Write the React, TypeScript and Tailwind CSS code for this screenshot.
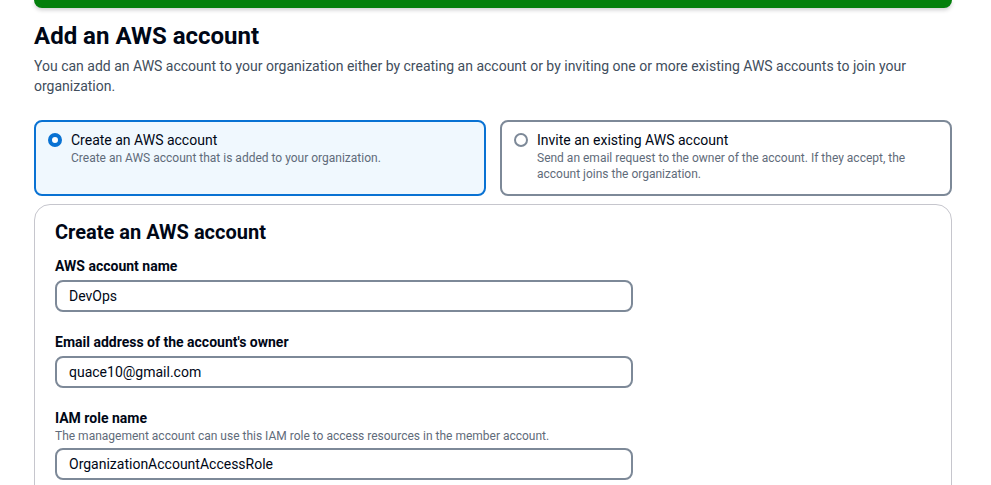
const font = { fontFamily: 'Roboto, "Liberation Sans", Arial, sans-serif' };

function Radio({ checked }: { checked: boolean }) {
  return checked ? (
    <span className="mt-[3px] box-border h-[14px] w-[14px] shrink-0 rounded-full border-[4px] border-[#0972d3] bg-white" />
  ) : (
    <span className="mt-[3px] box-border h-[14px] w-[14px] shrink-0 rounded-full border-2 border-[#7d8998] bg-white" />
  );
}

function Tile({
  checked,
  title,
  description,
}: {
  checked: boolean;
  title: string;
  description: string;
}) {
  return (
    <div
      className={
        checked
          ? "flex gap-[9px] rounded-lg border-2 border-[#0972d3] bg-[#f0f8fe] px-[12px] pt-[8px] pb-[12px]"
          : "flex gap-[9px] rounded-lg border-2 border-[#7d8998] bg-white px-[12px] pt-[8px] pb-[12px]"
      }
    >
      <Radio checked={checked} />
      <div className="flex flex-col">
        <span className="text-[14px] leading-[20px] text-[#000716]">{title}</span>
        <span className="text-[12px] leading-[16px] text-[#5f6b7a]">{description}</span>
      </div>
    </div>
  );
}

function Field({
  label,
  hint,
  value,
}: {
  label: string;
  hint?: string;
  value: string;
}) {
  return (
    <div className="flex flex-col">
      <label className="text-[14px] font-bold leading-[20px] text-[#000716]">{label}</label>
      {hint && <span className="text-[12px] leading-[16px] text-[#5f6b7a]">{hint}</span>}
      <div className="mt-[4px] flex h-[32px] w-[578px] items-center rounded-lg border-2 border-[#7d8998] px-[12px] text-[14px] text-[#000716]">
        {value}
      </div>
    </div>
  );
}

export default function App() {
  return (
    <div className="min-h-[485px] bg-white px-[34px] pb-6" style={font}>
      <div className="h-[8px] w-[918px] rounded-b-xl bg-[#037f0c] shadow-[0_2px_4px_rgba(0,7,22,0.2)]" />

      <h1 className="mt-[13px] text-[24px] font-bold leading-[30px] text-[#000716]">Add an AWS account</h1>
      <p className="mt-[5px] w-[918px] text-[14px] leading-[20px] text-[#414d5c]">
        You can add an AWS account to your organization either by creating an account or by inviting one or more
        existing AWS accounts to join your organization.
      </p>

      <div className="mt-[24px] grid w-[918px] grid-cols-2 gap-[14px]">
        <Tile
          checked
          title="Create an AWS account"
          description="Create an AWS account that is added to your organization."
        />
        <Tile
          checked={false}
          title="Invite an existing AWS account"
          description="Send an email request to the owner of the account. If they accept, the account joins the organization."
        />
      </div>

      <div className="mt-[8px] w-[918px] rounded-2xl border border-[#c6c6cd] px-[20px] pt-[14px] pb-5">
        <h2 className="text-[20px] font-bold leading-[26px] text-[#000716]">Create an AWS account</h2>
        <div className="mt-[11px] flex flex-col gap-[20px]">
          <Field label="AWS account name" value="DevOps" />
          <Field label="Email address of the account's owner" value="quace10@gmail.com" />
          <Field
            label="IAM role name"
            hint="The management account can use this IAM role to access resources in the member account."
            value="OrganizationAccountAccessRole"
          />
        </div>
      </div>
    </div>
  );
}
